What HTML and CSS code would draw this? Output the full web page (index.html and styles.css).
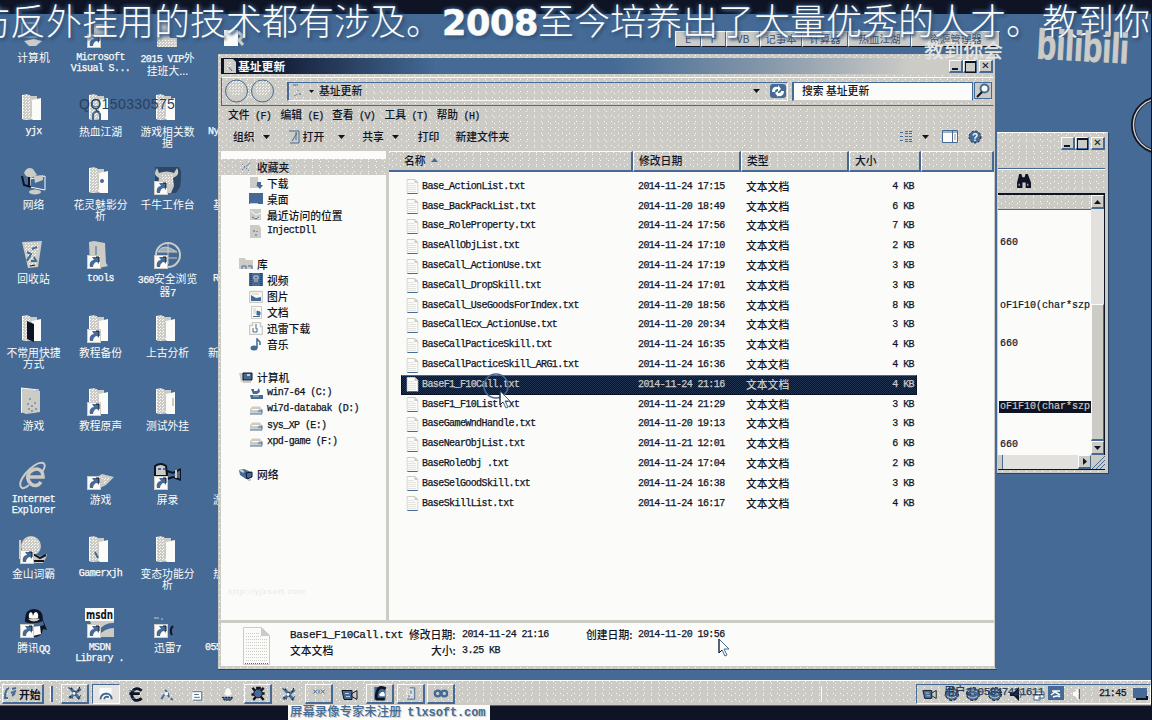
FILE: index.html
```html
<!DOCTYPE html>
<html lang="zh-CN">
<head>
<meta charset="utf-8">
<title>基址更新</title>
<link rel="stylesheet" href="styles.css">
</head>
<body>
<svg class="defs" width="0" height="0">
  <defs>
    <pattern id="dots" width="3" height="3" patternUnits="userSpaceOnUse"><rect width="1" height="1" fill="#fbfbf9"/><rect x="2" y="1" width="1" height="1" fill="#fbfbf9"/></pattern>
    <symbol id="folder" viewBox="0 0 30 30"><path d="M5 3l5-1 4 2 6 0v23l-9 1-4 0-2-1z" fill="#cccbc6"/><path d="M6 3l4-1 4 2v22l-4 2-4-1z" fill="url(#dots)"/><path d="M15 8l9-2v22h-8l-2-2z" fill="#fbfbf9"/><path d="M15 8v18M5.500 3v24" stroke="#fbfbf9" fill="none"/><path d="M14.500 9v16" stroke="#cccbc6"/></symbol>
    <symbol id="shortcut" viewBox="0 0 30 30"><rect x="3.500" y="16.500" width="13" height="13" fill="#fbfbf9" stroke="#cccbc6"/><path d="M6 28c-1-4 1-7 4-7l-2-3h7v7l-2-2c-2 0-4 2-4 5z" fill="#446a95"/><path d="M12 18h3v5" stroke="#0f1424" fill="none"/></symbol>
    <symbol id="txt" viewBox="0 0 12 15"><path d="M.500.500h8l3 3v11h-11z" fill="#fbfbf9" stroke="#cccbc6"/><path d="M2 4.500h6M2 6.500h8M2 8.500h8M2 10.500h8M2 12.500h8" stroke="#cccbc6" stroke-dasharray="1 1"/><path d="M8 0v4h4" fill="#cccbc6"/><path d="M1 14.500h10" stroke="#446a95"/></symbol>
    <symbol id="down" viewBox="0 0 7 4"><path d="M0 0h7L3.500 4z" fill="#0f1424"/></symbol>
    <symbol id="drive" viewBox="0 0 14 12"><path d="M1 6l2-3h8l2 3v4H1z" fill="#cccbc6"/><path d="M1 10.500h12M9 7.500h4M13 6v4" stroke="#446a95"/><path d="M3 6h7" stroke="#fbfbf9"/></symbol>
    <symbol id="cursor" viewBox="0 0 12 20"><path d="M1 1v14l3-3 3 6 2-1-3-6h5z" fill="#fbfbf9" stroke="#446a95"/><path d="M1 1v14l3-3" fill="none" stroke="#0f1424"/></symbol>
    <symbol id="pinwheel" viewBox="0 0 18 18"><path d="M9 9L4 3M9 9l6-5M9 9l5 6M9 9l-6 5" stroke="#446a95" stroke-width="3"/><path d="M2 3l4 1M14 2l-2 5M15 11l-3 4M3 12l4 2M9 6v6" stroke="#0f1424" stroke-dasharray="2 1"/><circle cx="8" cy="9" r="1.500" fill="#fbfbf9"/></symbol>
    <symbol id="camera" viewBox="0 0 18 14"><path d="M1 3h10v9H3z" fill="#446a95" stroke="#0f1424"/><path d="M11 6l5-3v9l-5-3z" fill="#cccbc6" stroke="#0f1424"/><path d="M4 6h4M5 9h4" stroke="#cccbc6"/></symbol>
    <symbol id="globe" viewBox="0 0 16 16"><circle cx="8" cy="8" r="6.500" fill="#446a95" stroke="#0f1424" stroke-dasharray="3 2"/><path d="M3 6q5-4 9 0M3 10q5 4 9 0M6 8h5" stroke="#cccbc6" fill="none"/></symbol>
  </defs>
</svg>

<div class="screen">
  <div class="icons">
    <!-- row 1 -->
    <div class="icon"><svg viewBox="0 0 30 30"><path d="M5 5h15v14H5z" fill="#446a95" stroke="#cccbc6"/><path d="M7 23l10-2 8 2-6 5h-7z" fill="#cccbc6"/></svg><span>计算机</span></div>
    <div class="icon"><svg viewBox="0 0 30 30"><path d="M10 6h14v13H10z" fill="#cccbc6"/><use href="#shortcut"/></svg><span class="m">Microsoft<br>Visual S...</span></div>
    <div class="icon"><svg viewBox="0 0 30 30"><path d="M7 2h8l4 18h7v9H6z" fill="#cccbc6"/><path d="M6 22h20v7H6z" fill="url(#dots)"/></svg><span><i class="m">2015 VIP</i>外<br>挂班大...</span></div>
    <div class="icon"><svg viewBox="0 0 30 30"><path d="M6 12h14v16H6z" fill="#fbfbf9"/><path d="M20 14l5 4-4 4 4 5" stroke="#cccbc6" stroke-width="3" fill="none"/></svg></div>
    <!-- row 2 -->
    <div class="icon"><svg viewBox="0 0 30 30"><use href="#folder"/></svg><span class="m">yjx</span></div>
    <div class="icon"><svg viewBox="0 0 30 30"><use href="#folder"/><circle cx="12" cy="11" r="4" fill="none" stroke="#446a95"/><path d="M9 28v-6q4-5 7 0v6" stroke="#446a95" stroke-width="2" fill="none"/></svg><span>热血江湖</span></div>
    <div class="icon"><svg viewBox="0 0 30 30"><use href="#folder"/></svg><span>游戏相关数<br>据</span></div>
    <div class="icon"><span class="m edge">Ny</span></div>
    <!-- row 3 -->
    <div class="icon"><svg viewBox="0 0 30 30"><path d="M7 8q3-7 9-4l4 6-6 3-5-2z" fill="#cccbc6"/><path d="M13 14l15-3v14l-15-3z" fill="#446a95" stroke="#fbfbf9"/><path d="M17 11l9-1v5l-8 3z" fill="#cccbc6"/><path d="M5 11l2 9 7 2M12 12v9" stroke="#0f1424" stroke-width="2" fill="none"/><ellipse cx="18" cy="27" rx="6" ry="2.500" fill="#cccbc6"/></svg><span>网络</span></div>
    <div class="icon"><svg viewBox="0 0 30 30"><use href="#folder"/><circle cx="18" cy="16" r="2" fill="#446a95"/></svg><span>花灵魅影分<br>析</span></div>
    <div class="icon"><svg viewBox="0 0 30 30"><path d="M4 2h24l3 6-2 14-4 6H12L4 17z" fill="#0f1424" opacity=".4"/><path d="M6 3l2 5q8-3 15 0l3-5q4 7-4 10l1 8-3 7H10L7 21l1-8Q1 10 6 3z" fill="#cccbc6"/><path d="M10 10h12v9H10z" fill="url(#dots)"/><use href="#shortcut"/></svg><span>千牛工作台</span></div>
    <div class="icon"><span class="edge c4">基</span></div>
    <!-- row 4 -->
    <div class="icon"><svg viewBox="0 0 30 30"><path d="M5 3l20-1-4 26-10 1z" fill="#cccbc6"/><path d="M7 4h15l-3 22-7 1z" fill="url(#dots)"/><path d="M10 13l4 2-2 4M14 22h5l-2-4M12 18l-2 4M20 8l-5 2" stroke="#446a95" stroke-width="2" fill="none"/><path d="M13 27l5-1" stroke="#0f1424"/></svg><span>回收站</span></div>
    <div class="icon"><svg viewBox="0 0 30 30"><path d="M5 3l5-1 11 2 1 20 2 3-9 2-9-1z" fill="#cccbc6"/><path d="M12 7v14" stroke="#446a95"/><use href="#shortcut"/></svg><span class="m">tools</span></div>
    <div class="icon"><svg viewBox="0 0 30 30"><circle cx="17" cy="16" r="12" fill="#446a95" stroke="#cccbc6" stroke-width="2"/><path d="M7 13q5-10 19 0zM17 5v20M8 19h18" stroke="#cccbc6" fill="#cccbc6" fill-opacity=".7"/><use href="#shortcut"/></svg><span><i class="m">360</i>安全浏览<br>器<i class="m">7</i></span></div>
    <div class="icon"><span class="m edge c4">R</span></div>
    <!-- row 5 -->
    <div class="icon"><svg viewBox="0 0 30 30"><use href="#folder"/><path d="M10 8l7 3v18l-7-3z" fill="#0f1424"/></svg><span>不常用快捷<br>方式</span></div>
    <div class="icon"><svg viewBox="0 0 30 30"><use href="#folder"/><use href="#shortcut"/></svg><span>教程备份</span></div>
    <div class="icon"><svg viewBox="0 0 30 30"><use href="#folder"/></svg><span>上古分析</span></div>
    <div class="icon"><span class="edge">新</span></div>
    <!-- row 6 -->
    <div class="icon"><svg viewBox="0 0 30 30"><path d="M4 2l9 1 10 2v21l-6 1-8 1-5-2z" fill="#cccbc6"/><path d="M4.500 2v25M4 2l18 2" stroke="#fbfbf9"/><path d="M13 12v2M11 17v2M15 19v2M18 16v2M12 22v2M19 22v2M15 24v2" stroke="#446a95"/></svg><span>游戏</span></div>
    <div class="icon"><svg viewBox="0 0 30 30"><use href="#folder"/><use href="#shortcut"/></svg><span>教程原声</span></div>
    <div class="icon"><svg viewBox="0 0 30 30"><use href="#folder"/><path d="M22 12v8" stroke="#cccbc6" stroke-width="2"/></svg><span>测试外挂</span></div>
    <div class="icon"></div>
    <!-- row 7 -->
    <div class="icon"><svg viewBox="0 0 30 30"><path d="M24 22q-4 6-10 2-6-6-1-12 7-6 12 0 1 3 1 5H12" fill="none" stroke="#cccbc6" stroke-width="3.500"/><path d="M5 28Q0 24 9 13 20 1 26 3q4 2-1 9M5 28q2 1 7-3" fill="none" stroke="#cccbc6" stroke-width="2"/></svg><span class="m">Internet<br>Explorer</span></div>
    <div class="icon"><svg viewBox="0 0 30 30"><path d="M13 17l5-3 12 3-8 8-6 3z" fill="#cccbc6"/><path d="M17 16l9 2-6 6z" fill="url(#dots)"/><use href="#shortcut"/></svg><span>游戏</span></div>
    <div class="icon"><svg viewBox="0 0 30 30"><path d="M4 6q6-4 11 0l1 10H4z" fill="#cccbc6" stroke="#0f1424" stroke-width="2"/><path d="M16 11l6 2 8-4v11l-8-3-6 2z" fill="#446a95" stroke="#0f1424" stroke-width="2"/><path d="M25 10v8" stroke="#cccbc6" stroke-width="2"/><path d="M7 9h3M12 9h2" stroke="#446a95" stroke-width="2"/><use href="#shortcut"/></svg><span>屏录</span></div>
    <div class="icon"><span class="edge c4">游</span></div>
    <!-- row 8 -->
    <div class="icon"><svg viewBox="0 0 30 30"><circle cx="14" cy="12" r="10" fill="#cccbc6"/><circle cx="14" cy="12" r="9" fill="url(#dots)"/><path d="M3 6v18h7" stroke="#cccbc6" fill="none" stroke-width="2"/><path d="M15 20l8 2 8-2-5 9H17z" fill="#cccbc6"/><path d="M16 20l7 4 6-3M17 27h10" stroke="#0f1424" stroke-width="2" fill="none"/><use href="#shortcut"/></svg><span>金山词霸</span></div>
    <div class="icon"><svg viewBox="0 0 30 30"><use href="#folder"/><path d="M11 18l3 6" stroke="#446a95" stroke-width="2"/></svg><span class="m">Gamerxjh</span></div>
    <div class="icon"><svg viewBox="0 0 30 30"><use href="#folder"/></svg><span>变态功能分<br>析</span></div>
    <div class="icon"><span class="edge c4">热</span></div>
    <!-- row 9 -->
    <div class="icon"><svg viewBox="0 0 30 30"><path d="M8 12q0-11 9-11t9 11l4 10-4-1q-1 8-9 8T8 22z" fill="#0f1424"/><path d="M12 10q-1-5 2-6 2 1 2 4 1-4 3-4 3 1 2 6z" fill="#fbfbf9"/><path d="M11 11q6-2 12 0-6 5-12 0z" fill="#cccbc6"/><path d="M8 14q9 3 18-1l1 4q-9 4-19 3z" fill="#446a95"/><path d="M15 19l8-1 1 8-8 2z" fill="#fbfbf9"/><use href="#shortcut"/></svg><span>腾讯<i class="m">QQ</i></span></div>
    <div class="icon"><svg viewBox="0 0 30 30"><path d="M1 0h29v29H12z" fill="#cccbc6"/><path d="M1 0h29v13H1z" fill="#fbfbf9"/><text class="msdn" x="2" y="10.500" textLength="27" lengthAdjust="spacingAndGlyphs">msdn</text><path d="M14 23q7-9 16-8v5q-9 0-16 8z" fill="#446a95"/><use href="#shortcut"/></svg><span class="m wide">MSDN<br>Library .</span></div>
    <div class="icon"><svg viewBox="0 0 30 30"><path d="M3 10h5M10 11h2" stroke="#cccbc6"/><path d="M22 18q-4 4-1 9" stroke="#0f1424" stroke-width="2" fill="none"/><use href="#shortcut"/></svg><span>迅雷<i class="m">7</i></span></div>
    <div class="icon"><span class="m edge c0">055</span></div>
  </div>

  <div class="qq">QQ150330575</div>
  <div class="dock"><b>E</b><b>F</b><b>VB</b><b>记事本</b><b>计算器</b><b>热血江湖</b><b>资源管理器</b></div>
  <svg class="orb" viewBox="0 0 20 60"><circle cx="29" cy="30" r="27" fill="#446a95" stroke="#0f1424" stroke-width="4"/><circle cx="29" cy="30" r="26.500" fill="none" stroke="#cccbc6" stroke-width="1.500"/></svg>

  <section class="back">
    <header class="back-title"><span class="wb min"></span><span class="wb max"></span><span class="wb cls">✕</span></header>
    <div class="back-tools"><svg viewBox="0 0 14 13"><path d="M3 0h2l1 3h2l1-3h2l3 8v5H9V8H6v5H1V8z" fill="#0f1424"/><path d="M3 9v2M11 9v2" stroke="#cccbc6"/></svg></div>
    <div class="back-body">
      <div class="code"><div class="code-head"></div><p class="p1">660</p><p class="p2">oF1F10(char*szp</p><p class="p3">660</p><p class="p4">oF1F10(char*szp</p><p class="p5">660</p></div>
      <div class="vs"><b><svg viewBox="0 0 7 4"><path d="M0 4h7L3.500 0z" fill="#0f1424"/></svg></b><i></i><em></em><b><svg viewBox="0 0 7 4"><use href="#down"/></svg></b></div>
    </div>
    <div class="hs"><i></i><b><svg viewBox="0 0 4 7"><path d="M0 0v7l4-3.500z" fill="#0f1424"/></svg></b><svg class="grip" viewBox="0 0 14 14"><path d="M1 14L14 1M5 14l9-9M9 14l5-5" stroke="#446a95"/></svg></div>
  </section>

  <main class="win">
    <header class="title"><svg viewBox="0 0 12 14"><path d="M0 0h9l3 3v11H0z" fill="#cccbc6"/><path d="M3 2h5v8H3z" fill="url(#dots)"/><path d="M5 8l3 4" stroke="#446a95"/></svg><span>基址更新</span><div class="btns"><span class="wb min"></span><span class="wb max"></span><span class="wb cls">✕</span></div></header>
    <div class="addr">
      <svg class="nav" viewBox="0 0 52 26"><path d="M14 6h24v16l-12-2-12 2z" fill="url(#dots)"/><circle cx="12.500" cy="13" r="11" fill="#cccbc6" stroke="#446a95"/><circle cx="38.500" cy="13" r="11" fill="#cccbc6" stroke="#446a95"/><circle cx="12.500" cy="10" r="8" fill="url(#dots)"/><circle cx="38.500" cy="10" r="8" fill="url(#dots)"/></svg>
      <div class="path"><svg class="pf" viewBox="0 0 12 14"><path d="M1 1h5M3 11v1M6 6v1M8 9v2M5 10v1" stroke="#446a95"/></svg><svg class="dn s" viewBox="0 0 7 4"><use href="#down"/></svg><span>基址更新</span><svg class="dn last" viewBox="0 0 7 4"><use href="#down"/></svg><svg class="rf" viewBox="0 0 18 16"><rect x="1" y="1" width="16" height="14" rx="3" fill="#446a95"/><path d="M3 9q0-6 6-5v-2l3 4-3 3V6q-3 0-3 3zM15 8q0 6-6 5v1l-3-4 3-2v2q3 0 3-2z" fill="#fbfbf9"/></svg></div>
      <div class="search"><span>搜索 基址更新</span></div>
      <svg class="mag" viewBox="0 0 18 18"><rect x=".5" y=".5" width="17" height="16" fill="#cccbc6" stroke="#446a95"/><circle cx="10.500" cy="6.500" r="4" fill="#fbfbf9" stroke="#446a95" stroke-width="2"/><path d="M8 10l-5 5" stroke="#0f1424" stroke-width="2"/></svg>
    </div>
    <nav class="menu"><span>文件<i class="m"> (F)</i></span><span>编辑<i class="m"> (E)</i></span><span>查看<i class="m"> (V)</i></span><span>工具<i class="m"> (T)</i></span><span>帮助<i class="m"> (H)</i></span></nav>
    <div class="tools">
      <span class="t1">组织</span><svg class="dn" viewBox="0 0 7 4"><use href="#down"/></svg>
      <svg class="op" viewBox="0 0 12 14"><path d="M1 1h10v12H2M8 2v8" fill="#cccbc6" stroke="#446a95"/><path d="M4 11l5-8" stroke="#446a95"/></svg><span>打开</span><svg class="dn d2" viewBox="0 0 7 4"><use href="#down"/></svg>
      <span class="t3">共享</span><svg class="dn d3" viewBox="0 0 7 4"><use href="#down"/></svg><span class="t4">打印</span><span class="t5">新建文件夹</span>
      <div class="view"><svg class="v1" viewBox="0 0 13 13"><path d="M1 2.500h3M1 6.500h3M1 10.500h3M6 1.500h7M6 3.500h7M6 6.500h7M6 9.500h7M6 11.500h7" stroke="#446a95" stroke-dasharray="3 1"/></svg><svg class="dn" viewBox="0 0 7 4"><use href="#down"/></svg><svg class="v2" viewBox="0 0 16 13"><path d="M.500.500h15v12H.500z" fill="#fbfbf9" stroke="#446a95"/><path d="M10.500 1v12M1 2h14" stroke="#446a95"/><path d="M13 4v6" stroke="#cccbc6" stroke-width="2"/></svg><svg class="v3" viewBox="0 0 14 14"><circle cx="7" cy="7" r="6" fill="#446a95" stroke="#0f1424" stroke-dasharray="2 2"/><text x="4" y="11" class="q">?</text></svg></div>
    </div>
    <div class="content">
      <aside class="side">
        <div class="g hl"><svg viewBox="0 0 14 13"><path d="M3 10l2-2 4-3 3-3M3 4l3 3 4 4" stroke="#446a95" stroke-dasharray="1 2"/></svg>收藏夹</div>
        <div class="k"><svg viewBox="0 0 14 13"><path d="M1 1h8v11H1z" fill="#cccbc6"/><path d="M8 6h4v3h2l-3 4-4-4h1z" fill="#446a95"/></svg>下载</div>
        <div class="k"><svg viewBox="0 0 14 13"><path d="M0 1h14v11H0z" fill="#446a95"/><path d="M1 11.500h8" stroke="#cccbc6"/></svg>桌面</div>
        <div class="k"><svg viewBox="0 0 14 13"><path d="M1 1h11v11H1z" fill="#cccbc6"/><path d="M2 3l5 4 5-2M4 10h7" stroke="#fbfbf9" fill="none"/><path d="M3 9l4 2 3-2" stroke="#446a95" fill="none"/></svg>最近访问的位置</div>
        <div class="k"><svg viewBox="0 0 14 13"><path d="M1 0h9l2 3v10H1z" fill="#cccbc6"/><path d="M5 5v2M7 9v2M8 6v1" stroke="#446a95"/></svg><i class="m">InjectDll</i></div>
        <div class="g gap"><svg viewBox="0 0 14 13"><path d="M0 1h6l1 2h7v9H0z" fill="#cccbc6"/><path d="M3 12v-3h4v3M9 9h4v3" stroke="#446a95" fill="none"/></svg>库</div>
        <div class="k"><svg viewBox="0 0 14 13"><path d="M0 0h14v13H0z" fill="#446a95"/><path d="M2 0v13M12 0v13" stroke="#0f1424" stroke-dasharray="1 1"/><path d="M5 3h4v3H5zM5 8h4" stroke="#cccbc6" fill="none"/></svg>视频</div>
        <div class="k"><svg viewBox="0 0 14 13"><rect x=".5" y="1.500" width="13" height="11" rx="1" fill="#fbfbf9" stroke="#cccbc6" stroke-width="1.500"/><path d="M2 5l5 3 5-1v4H2z" fill="#446a95"/><path d="M3 4h7" stroke="#cccbc6"/></svg>图片</div>
        <div class="k"><svg viewBox="0 0 14 13"><path d="M2.500.500h10v12h-10z" fill="#fbfbf9" stroke="#cccbc6"/><path d="M4 3h3M4 5h3M4 7h3" stroke="#cccbc6"/><path d="M8 5l3 1v3H8zM4 10.500h7" stroke="#446a95" fill="#446a95"/></svg>文档</div>
        <div class="k"><svg viewBox="0 0 14 13"><path d="M3.500.500h8v4h2v8H.500v-9h3z" fill="#fbfbf9" stroke="#cccbc6" stroke-width="1.500"/><path d="M4 6v4h4V6M7 2v5" stroke="#446a95" fill="none"/></svg>迅雷下载</div>
        <div class="k"><svg viewBox="0 0 14 13"><path d="M8 10V1l3 3v3" stroke="#446a95" stroke-width="1.500" fill="none"/><ellipse cx="5" cy="10" rx="3.500" ry="2.500" fill="#446a95"/></svg>音乐</div>
        <div class="g gap"><svg viewBox="0 0 14 13"><path d="M0 2h5v9H2z" fill="#cccbc6"/><path d="M4 2h9v7H4z" fill="#446a95" stroke="#0f1424"/><path d="M8 4h3M4 11h8" stroke="#cccbc6" stroke-width="2"/></svg>计算机</div>
        <div class="k"><svg viewBox="0 0 14 13"><path d="M2 2h3v2h3l2-3 1 4-3 2H4z" fill="#446a95"/><path d="M1 8h13v4H2z" fill="#446a95"/><path d="M4 9h6" stroke="#cccbc6"/></svg><i class="m">win7-64 (C:)</i></div>
        <div class="k"><svg viewBox="0 0 14 12"><use href="#drive"/></svg><i class="m">wi7d-databak (D:)</i></div>
        <div class="k"><svg viewBox="0 0 14 12"><use href="#drive"/></svg><i class="m">sys_XP (E:)</i></div>
        <div class="k"><svg viewBox="0 0 14 12"><use href="#drive"/></svg><i class="m">xpd-game (F:)</i></div>
        <div class="g gap"><svg viewBox="0 0 14 13"><path d="M0 2l5-1 7 3-1 6-4 1-6-4z" fill="#446a95"/><path d="M7 5l6-1v5l-5 2z" fill="#446a95" stroke="#0f1424"/><path d="M1 2l4 2M9 12h3" stroke="#cccbc6" stroke-width="2"/></svg>网络</div>
        <div class="ghost">http://yjxsoft.com</div>
      </aside>
      <div class="list">
        <div class="head"><span>名称 <svg viewBox="0 0 7 4"><path d="M0 4h7L3.500 0z" fill="#446a95"/></svg></span><span>修改日期</span><span>类型</span><span>大小</span><span></span></div>
        <div class="row"><svg viewBox="0 0 12 15"><use href="#txt"/></svg><i class="m">Base_ActionList.txt</i><i class="m">2014-11-24 17:15</i><span>文本文档</span><i class="m">4 KB</i></div>
        <div class="row"><svg viewBox="0 0 12 15"><use href="#txt"/></svg><i class="m">Base_BackPackList.txt</i><i class="m">2014-11-20 18:49</i><span>文本文档</span><i class="m">6 KB</i></div>
        <div class="row"><svg viewBox="0 0 12 15"><use href="#txt"/></svg><i class="m">Base_RoleProperty.txt</i><i class="m">2014-11-24 17:56</i><span>文本文档</span><i class="m">7 KB</i></div>
        <div class="row"><svg viewBox="0 0 12 15"><use href="#txt"/></svg><i class="m">BaseAllObjList.txt</i><i class="m">2014-11-24 17:10</i><span>文本文档</span><i class="m">2 KB</i></div>
        <div class="row"><svg viewBox="0 0 12 15"><use href="#txt"/></svg><i class="m">BaseCall_ActionUse.txt</i><i class="m">2014-11-24 17:19</i><span>文本文档</span><i class="m">3 KB</i></div>
        <div class="row"><svg viewBox="0 0 12 15"><use href="#txt"/></svg><i class="m">BaseCall_DropSkill.txt</i><i class="m">2014-11-24 17:01</i><span>文本文档</span><i class="m">3 KB</i></div>
        <div class="row"><svg viewBox="0 0 12 15"><use href="#txt"/></svg><i class="m">BaseCall_UseGoodsForIndex.txt</i><i class="m">2014-11-20 18:56</i><span>文本文档</span><i class="m">8 KB</i></div>
        <div class="row"><svg viewBox="0 0 12 15"><use href="#txt"/></svg><i class="m">BaseCallEcx_ActionUse.txt</i><i class="m">2014-11-20 20:34</i><span>文本文档</span><i class="m">3 KB</i></div>
        <div class="row"><svg viewBox="0 0 12 15"><use href="#txt"/></svg><i class="m">BaseCallPacticeSkill.txt</i><i class="m">2014-11-24 16:35</i><span>文本文档</span><i class="m">4 KB</i></div>
        <div class="row"><svg viewBox="0 0 12 15"><use href="#txt"/></svg><i class="m">BaseCallPacticeSkill_ARG1.txt</i><i class="m">2014-11-24 16:36</i><span>文本文档</span><i class="m">4 KB</i></div>
        <div class="row sel"><svg viewBox="0 0 12 15"><use href="#txt"/></svg><i class="m">BaseF1_F10Call.txt</i><i class="m">2014-11-24 21:16</i><span>文本文档</span><i class="m">4 KB</i></div>
        <div class="row"><svg viewBox="0 0 12 15"><use href="#txt"/></svg><i class="m">BaseF1_F10List.txt</i><i class="m">2014-11-24 21:29</i><span>文本文档</span><i class="m">3 KB</i></div>
        <div class="row"><svg viewBox="0 0 12 15"><use href="#txt"/></svg><i class="m">BaseGameWndHandle.txt</i><i class="m">2014-11-20 19:13</i><span>文本文档</span><i class="m">3 KB</i></div>
        <div class="row"><svg viewBox="0 0 12 15"><use href="#txt"/></svg><i class="m">BaseNearObjList.txt</i><i class="m">2014-11-21 12:01</i><span>文本文档</span><i class="m">6 KB</i></div>
        <div class="row"><svg viewBox="0 0 12 15"><use href="#txt"/></svg><i class="m">BaseRoleObj .txt</i><i class="m">2014-11-24 17:04</i><span>文本文档</span><i class="m">2 KB</i></div>
        <div class="row"><svg viewBox="0 0 12 15"><use href="#txt"/></svg><i class="m">BaseSelGoodSkill.txt</i><i class="m">2014-11-24 16:38</i><span>文本文档</span><i class="m">3 KB</i></div>
        <div class="row"><svg viewBox="0 0 12 15"><use href="#txt"/></svg><i class="m">BaseSkillList.txt</i><i class="m">2014-11-24 16:17</i><span>文本文档</span><i class="m">4 KB</i></div>
      </div>
    </div>
    <footer class="detail">
      <svg viewBox="0 0 27 38"><path d="M.500.500h18l8 8v29H.500z" fill="#fbfbf9" stroke="#cccbc6"/><path d="M3 6.500h14M3 9.500h16M3 12.500h21M3 15.500h21M3 18.500h21M3 21.500h21M3 24.500h21M3 27.500h21M3 30.500h21M3 33.500h21" stroke="#cccbc6" stroke-dasharray="1 1"/><path d="M18 0v9h9z" fill="#cccbc6"/><path d="M2 36.500h23" stroke="#446a95" stroke-dasharray="1 1"/></svg>
      <div class="meta"><i class="m big">BaseF1_F10Call.txt</i><span>修改日期:</span><i class="m">2014-11-24 21:16</i><span class="cr">创建日期:</span><i class="m">2014-11-20 19:56</i><span>文本文档</span><span class="sz">大小:</span><i class="m">3.25 KB</i></div>
    </footer>
  </main>

  <svg class="ring" viewBox="0 0 28 28"><circle cx="14" cy="14" r="12" fill="none" stroke="#446a95" stroke-width="1.500"/></svg>
  <svg class="cur c-a" viewBox="0 0 12 20"><use href="#cursor"/></svg>
  <svg class="cur c-b" viewBox="0 0 12 20"><use href="#cursor"/></svg>

  <footer class="bar">
    <div class="start"><svg viewBox="0 0 15 15"><path d="M2 12q0-9 4-10M1 12h4M9 3l4-1M8 7l5-2M9 10l3-3" stroke="#446a95" stroke-width="2" fill="none"/></svg>开始</div>
    <i class="sep"></i>
    <div class="tb up w1"><svg viewBox="0 0 18 18"><use href="#pinwheel"/></svg></div>
    <div class="tb in"><svg viewBox="0 0 18 18"><path d="M2 2h13v12H2z" fill="#fbfbf9"/><path d="M3 14q1-6 7-6 5 1 5 6M7 14q1-4 5-2" stroke="#446a95" stroke-width="2" fill="none"/></svg></div>
    <div class="tb"><svg viewBox="0 0 18 18"><path d="M15 5q-6-5-10 1-2 6 3 9 4 1 7-2M2 8h11" stroke="#0f1424" stroke-width="3" fill="none"/><path d="M2 5h5M4 13h4" stroke="#446a95"/></svg></div>
    <div class="tb"><svg viewBox="0 0 18 18"><path d="M3 14l3-5M7 4l3 4 1 4M13 13l2 2" stroke="#446a95" stroke-width="2"/><path d="M7 8h3" stroke="#fbfbf9" stroke-width="3"/></svg></div>
    <div class="tb"><svg viewBox="0 0 18 18"><path d="M4 5h10v10H4z" fill="#fbfbf9"/><path d="M4 6h10v9H5M6 9h5M6 12h6" stroke="#446a95" fill="none"/></svg></div>
    <div class="tb"><svg viewBox="0 0 18 18"><path d="M6 10V5q3-6 6 0v5z" fill="#fbfbf9"/><path d="M3 12h11l-2 3H5z" fill="#446a95" stroke="#0f1424" stroke-dasharray="2 1"/></svg></div>
    <div class="tb up"><svg viewBox="0 0 18 18"><path d="M3 3l4 4M15 3l-4 4M2 10h4M16 9h-4M4 16l4-5M15 16l-4-5M7 3h5" stroke="#0f1424" stroke-width="2.500"/><circle cx="9" cy="9" r="4.500" fill="#446a95" stroke="#0f1424"/></svg></div>
    <div class="tb"><svg viewBox="0 0 18 18"><use href="#pinwheel"/></svg></div>
    <div class="tb up"><svg viewBox="0 0 18 18"><path d="M3 5l4 4M7 5L3 9M9 5v4M11 5l4 4M15 5l-4 4" stroke="#446a95"/></svg></div>
    <div class="tb"><svg viewBox="0 0 18 14"><use href="#camera"/></svg></div>
    <div class="tb up"><svg viewBox="0 0 18 18"><path d="M3 2h12v14H3z" fill="#446a95"/><path d="M15 4q-7-4-9 3-2 6 0 8h8" stroke="#0f1424" stroke-width="3" fill="none"/><path d="M8 10q4-5 6-1v3H9z" fill="#fbfbf9"/></svg></div>
    <div class="tb up"><svg viewBox="0 0 18 18"><path d="M3 3h10v12H3z" fill="url(#dots)" stroke="#cccbc6"/><path d="M9 3h5v12H6M10 6v3M8 11v2" stroke="#446a95" fill="none"/></svg></div>
    <div class="tb up"><svg viewBox="0 0 18 18"><circle cx="5.500" cy="9" r="3" fill="none" stroke="#446a95" stroke-width="2.500"/><circle cx="12.500" cy="9" r="3" fill="none" stroke="#446a95" stroke-width="2.500"/></svg></div>
    <i class="sep far"></i>
    <div class="tray">
      <svg viewBox="0 0 18 14"><use href="#camera"/></svg><svg viewBox="0 0 16 16"><use href="#globe"/></svg><svg viewBox="0 0 16 16"><use href="#globe"/></svg><svg viewBox="0 0 16 16"><use href="#globe"/></svg><svg viewBox="0 0 16 16"><path d="M2 6h4l5-5v14l-5-5H2z" fill="#0f1424"/><path d="M12 5q3 3 0 7" stroke="#446a95" fill="none"/></svg><svg viewBox="0 0 16 16"><path d="M5 6h9v6H8M4 9h6v5H4z" fill="#fbfbf9" stroke="#446a95"/></svg><svg class="sq" viewBox="0 0 16 16"><rect width="16" height="14" fill="#446a95"/><path d="M3 9l4-3 5 3M4 5h8M5 11q5-2 7 0" stroke="#fbfbf9" fill="none" stroke-width="1.500"/></svg><svg class="sp" viewBox="0 0 12 16"><path d="M3 6h2l3-4v12l-3-4H3z" fill="#fbfbf9"/><path d="M9.500 3v10" stroke="#446a95"/></svg><span class="m time">21:45</span><svg class="mon" viewBox="0 0 16 16"><path d="M1 2h14v10H1z" fill="#446a95"/><path d="M4 13h11v-3" stroke="#0f1424" stroke-width="2" fill="none"/></svg>
      <div class="id">用户<i class="m">2:05847421611</i></div>
    </div>
  </footer>
  <div class="rec">屏幕录像专家未注册 <i>tlxsoft.com</i></div>

  <div class="marquee">防反外挂用的技术都有涉及。<b>2008</b>至今培养出了大量优秀的人才。教到你</div>
  <div class="teach">教到你会</div>
  <svg class="bili" viewBox="0 0 94 46"><text x="0" y="38" textLength="92" lengthAdjust="spacingAndGlyphs" transform="rotate(3 46 23)">bilibili</text></svg>
</div>
</body>
</html>
```

FILE: styles.css
```css
:root { --ink: #0f1424; --blue: #446a95; --gray: #cccbc6; --paper: #fbfbf9; --cjk: "Noto Sans CJK SC", sans-serif; }
* { box-sizing: border-box; }
html { background: var(--ink); }
body { margin: 0; width: 1152px; height: 720px; overflow: hidden; }
i { font-style: normal; }
p { margin: 0; }
svg { display: block; flex: none; }
.defs { position: absolute; }
.m { font-family: "Liberation Mono", monospace; font-size: 10px; letter-spacing: -.59px; white-space: pre; -webkit-text-stroke: .25px currentColor; }
.screen { position: relative; width: 1152px; height: 720px; background: var(--blue); border-top: 14px solid var(--ink); border-right: 1px solid var(--ink); color: var(--ink); font: 500 10.8px/16px "Noto Sans CJK SC", sans-serif; }

/* dithered button-face surfaces */
.win, .back, .bar, .head span, .code-head, .hl {
  background-color: var(--gray);
  background-image: radial-gradient(circle at .5px .5px, var(--paper) .6px, transparent .7px), radial-gradient(circle at 3.5px 2.5px, var(--paper) .6px, transparent .7px);
  background-size: 7px 6px, 8px 6px;
}

.icons { display: grid; grid-template-columns: repeat(4, 67px); grid-auto-rows: 73.7px; padding-top: 4px; font-weight: 400; }
.icon { display: flex; flex-direction: column; align-items: center; height: 73px; color: var(--paper); text-align: center; line-height: 11px; white-space: nowrap; }
.icon > svg { width: 30px; height: 30px; margin-right: 4px; }
.icon > span { margin-top: 4px; width: 67px; }
.icon > .edge { margin-top: 34px; text-align: left; padding-left: 7px; }
.icon > .c4 { padding-left: 12px; }
.icon > .c0 { padding-left: 4px; }
.icon > .wide { padding-right: 2px; }
.msdn { font: bold 12px "DejaVu Sans", sans-serif; fill: var(--ink); }

.qq { position: absolute; left: 79px; top: 83px; font: 14px/14px "Liberation Sans", sans-serif; letter-spacing: .4px; color: #29405f; }
.dock { position: absolute; left: 675px; top: 17px; width: 325px; height: 16px; display: grid; grid-template-columns: 26px 25px 34px 42px 46px 63px 89px; }
.dock b { background: var(--gray); border: 1px solid var(--paper); border-right-color: var(--blue); border-bottom-color: var(--ink); font-weight: 400; font-size: 10.5px; line-height: 13px; text-align: center; overflow: hidden; color: #35527a; }
.orb { position: absolute; left: 1131px; top: 81px; width: 20px; height: 60px; }

.wb { display: block; width: 14px; height: 13px; background: var(--gray); border: 1px solid var(--paper); border-right: 2px solid var(--blue); border-bottom: 2px solid var(--blue); position: relative; color: var(--ink); }
.min::after { content: ""; position: absolute; left: 2px; bottom: 1px; width: 6px; height: 2px; background: var(--ink); }
.max::after { content: ""; position: absolute; left: 1px; top: 0; width: 9px; height: 9px; border: 1px solid var(--ink); border-top-width: 2px; }
.cls { margin-left: 2px; font: bold 10px/10px "DejaVu Sans", sans-serif; text-align: center; }

.back { position: absolute; left: 990px; top: 118px; width: 118px; height: 341px; border: 1px solid var(--gray); border-top-color: var(--paper); border-right: 3px solid var(--gray); display: flex; flex-direction: column; padding-left: 7px; box-shadow: 1px 1px 0 #2a4365; }
.back-title { display: flex; justify-content: flex-end; padding-top: 4px; height: 36px; border-bottom: 1px solid var(--blue); }
.back-tools { height: 26px; border-top: 1px solid var(--paper); border-bottom: 2px solid var(--ink); padding: 4px 0 0 18px; }
.back-tools svg { width: 15px; height: 14px; }
.back-body { height: 260px; display: flex; background: var(--paper); border-right: 1px solid var(--ink); }
.code { width: 94px; overflow: hidden; font: 10px/12px "Liberation Mono", monospace; padding-left: 1px; -webkit-text-stroke: .2px currentColor; }
.code-head { height: 15px; margin-left: -1px; border-bottom: 1px solid var(--blue); }
.code p { height: 12px; padding-left: 1px; }
.p1 { margin-top: 27px; } .p2 { margin-top: 51px; } .p3 { margin-top: 26px; }
.code .p4 { margin-top: 51px; background: var(--ink); color: var(--gray); }
.p5 { margin-top: 26px; }
.vs { width: 13px; display: flex; flex-direction: column; background: #e2e1dd; }
.vs b, .hs b { height: 14px; width: 13px; display: grid; place-items: center; background: var(--gray); border: 1px solid var(--paper); border-right-color: var(--blue); border-bottom: 2px solid var(--blue); }
.vs b svg { width: 7px; height: 4px; }
.vs i { height: 95px; }
.vs em { flex: 1; background: var(--gray); border: 1px solid var(--paper); border-right-color: var(--blue); border-bottom: 2px solid var(--blue); }
.hs { display: flex; height: 15px; background: #e2e1dd; border-bottom: 1px solid var(--ink); }
.hs i { width: 5px; background: var(--gray); border-right: 1px solid var(--blue); }
.hs b { margin-left: auto; }
.hs b svg { width: 4px; height: 7px; }
.grip { width: 14px; height: 14px; background: var(--gray); }

.win { position: absolute; left: 218px; top: 40px; width: 779px; height: 615px; border: 1px solid var(--gray); border-right: 2px solid var(--blue); box-shadow: 0 1px 0 #2a4365; display: flex; flex-direction: column; padding: 3px 1px 2px 2px; }
.title { height: 16px; flex: none; display: flex; align-items: center; padding-left: 3px; background: linear-gradient(90deg, #0f1424 0, #15203a 60px, #446a95 215px, #446a95 390px, #8799ab 550px, #cccbc6 690px); color: var(--paper); font-weight: 700; font-size: 11.8px; }
.title svg { width: 12px; height: 14px; margin-right: 2px; }
.title > span { padding-bottom: 1px; }
.btns { display: flex; margin-left: auto; padding-right: 1px; }
.addr { height: 29px; flex: none; margin-top: 3px; display: flex; align-items: center; border: 1px solid var(--blue); border-top-color: var(--paper); border-right-color: var(--gray); padding-left: 2px; padding-bottom: 1px; }
.nav { width: 52px; height: 26px; }
.path { width: 501px; height: 19px; margin-left: 11px; border: 1px solid var(--paper); border-top: 1px solid var(--blue); border-left: 2px solid var(--blue); display: flex; align-items: center; color: var(--ink); }
.path span { padding-bottom: 3px; }
.pf { width: 12px; height: 14px; margin: 0 5px 0 3px; }
.dn { width: 7px; height: 4px; }
.s { width: 5px; height: 3px; margin-right: 5px; }
.last { margin-left: auto; margin-right: 9px; }
.rf { width: 18px; height: 16px; }
.search { width: 181px; height: 19px; margin-left: 4px; background: var(--paper); border: 1px solid var(--blue); border-left-width: 2px; border-bottom-color: var(--gray); padding-left: 8px; line-height: 15px; }
.mag { width: 18px; height: 18px; margin-left: 1px; }
.menu { display: grid; grid-template-columns: 52.500px 51.500px 52.500px 52px 60px; height: 20px; flex: none; padding: 0 0 0 7px; }
.menu span { white-space: nowrap; }
.tools { height: 23px; flex: none; display: flex; align-items: center; padding: 0 0 2px 12px; }
.tools span { margin-top: -1px; }
.t1 { margin-right: 8px; } .op { width: 12px; height: 14px; margin: 0 3px 0 18px; }
.d2 { margin-left: 14px; } .t3 { margin-left: 17px; } .d3 { margin-left: 8px; } .t4 { margin-left: 19px; } .t5 { margin-left: 16px; }
.view { display: flex; align-items: center; margin-left: auto; padding-right: 12px; }
.v1 { width: 13px; height: 13px; margin-right: 10px; } .v2 { width: 16px; height: 13px; margin: 0 10px 0 13px; } .v3 { width: 14px; height: 14px; }
.q { font: bold 10px "Liberation Sans", sans-serif; fill: var(--paper); }

.content { height: 469px; flex: none; display: flex; background: var(--paper); margin-top: 2px; }
.side { width: 168px; border-right: 3px solid var(--gray); padding-top: 8px; }
.side > div { height: 16.15px; display: flex; align-items: center; white-space: nowrap; line-height: 14px; padding-bottom: 1px; }
.side svg { width: 14px; height: 13px; margin-right: 4px; }
.side .g { padding-left: 18px; }
.side .k { padding-left: 28px; }
.side .gap { margin-top: 16.5px; }
.side .ghost { margin-top: 101px; padding-left: 7px; font: italic 8px "Liberation Sans", sans-serif; letter-spacing: 1px; color: #e9e8e4; }
.list { flex: 1; }
.head { display: grid; grid-template-columns: 244px 108px 108px 72px 1fr; height: 21px; margin-bottom: 5px; }
.head span { border: 1px solid var(--paper); border-bottom: 2px solid var(--blue); border-right: 2px solid var(--blue); padding: 0 0 2px 5px; display: flex; align-items: center; gap: 5px; }
.head span:first-child { padding-left: 15px; border-left: 0; }
.head svg { width: 7px; height: 4px; }
.row { display: grid; grid-template-columns: 16px 216px 108px 108px 60px; align-items: center; height: 19.8px; width: 516px; margin-left: 12px; padding-left: 5px; }
.row svg { width: 13px; height: 15px; }
.row > span { margin-top: -2px; }
.row > :last-child { text-align: right; }
.sel { color: var(--gray); border: 1px solid var(--ink); border-top-color: var(--blue); padding-left: 4px; background: repeating-conic-gradient(#0f1424 0 25%, #1f3351 0 50%) 0 0/2px 2px; }
.detail { flex: 1; border-top: 3px solid var(--gray); background: var(--paper); display: flex; padding: 4px 0 0 22px; }
.detail svg { width: 27px; height: 38px; margin-right: 20px; }
.meta { display: grid; grid-template-columns: 119px 53px 124px 52px 100px; grid-auto-rows: 16px; align-content: start; line-height: 16px; }
.meta span { white-space: nowrap; margin-top: -1px; }
.big { font-size: 11px; letter-spacing: -.3px; }
.meta .sz { padding-left: 22px; }
.meta > span:nth-of-type(3) { grid-column: 1; }

.ring { position: absolute; left: 482px; top: 358px; width: 28px; height: 28px; }
.cur { position: absolute; width: 12px; height: 20px; }
.c-a { left: 499px; top: 376px; }
.c-b { left: 718px; top: 624px; }

.bar { position: absolute; left: 0; top: 666px; width: 1151px; height: 26px; border-top: 1px solid var(--paper); border-bottom: 1px solid var(--blue); display: flex; align-items: center; padding-left: 2px; box-shadow: 0 14px 0 var(--ink); padding-top: 2px; }
.start { width: 42px; height: 20px; display: flex; align-items: center; font-weight: 700; border: 1px solid var(--paper); border-right: 2px solid var(--blue); border-bottom: 2px solid var(--blue); white-space: nowrap; line-height: 14px; }
.start svg { width: 15px; height: 15px; margin: 0 1px 0 0; }
.sep { width: 3px; height: 16px; margin: 0 8px 0 6px; border-left: 1px solid var(--paper); border-right: 2px solid var(--blue); }
.tb { width: 28px; height: 20px; margin-right: 2.5px; display: grid; place-items: center; border: 1px solid transparent; }
.tb svg { width: 18px; height: 17px; }
.up { border: 1px solid var(--paper); border-right: 2px solid var(--blue); border-bottom: 2px solid var(--blue); }
.in { border: 1px solid var(--blue); border-right-color: var(--paper); border-bottom-color: var(--paper); background: #e5e4e0; }
.far { border-right: 0; margin-left: auto; margin-right: 92px; }
.tray { position: relative; width: 235px; height: 20px; border: 1px solid var(--blue); border-right-color: var(--paper); border-bottom-color: var(--paper); display: flex; align-items: center; gap: 5.5px; padding-left: 5px; }
.tray svg { width: 16px; height: 16px; }
.tray .sq { margin-left: -3px; }
.tray .sp { width: 12px; }
.time { margin-left: 12px; }
.tray .mon { margin-left: 0; }
.id { position: absolute; left: 27px; top: -3px; color: #253b5c; white-space: nowrap; }
.id .m { font-size: 11px; }
.rec { position: absolute; left: 288px; top: 691px; width: 202px; height: 15px; background: var(--paper); color: var(--blue); font-size: 12.4px; font-weight: 500; line-height: 13px; white-space: nowrap; padding-left: 2px; text-shadow: 1px 1px 0 var(--gray); }
.rec i { font: bold 12px/13px "Liberation Mono", monospace; letter-spacing: -.1px; margin-left: 3px; }

.marquee { position: absolute; left: -26px; top: -18px; width: 1200px; font: 300 36px/47px var(--cjk); color: var(--paper); white-space: nowrap; text-shadow: 0 0 4px #446a95, 0 0 5px #446a95, 2px 2px 3px #2a4365; }
.marquee b { font: 700 35px/40px "DejaVu Sans", sans-serif; letter-spacing: -.35px; -webkit-text-stroke: .6px var(--paper); }
.teach { position: absolute; left: 924px; top: 24px; font: 500 19.800px/24px var(--cjk); color: #e6e5e1; }
.bili { position: absolute; left: 1037px; top: 9px; width: 94px; height: 46px; overflow: visible; }
.bili text { font: bold 42px "Liberation Sans", sans-serif; fill: var(--gray); stroke: var(--gray); stroke-width: 1px; }
```
